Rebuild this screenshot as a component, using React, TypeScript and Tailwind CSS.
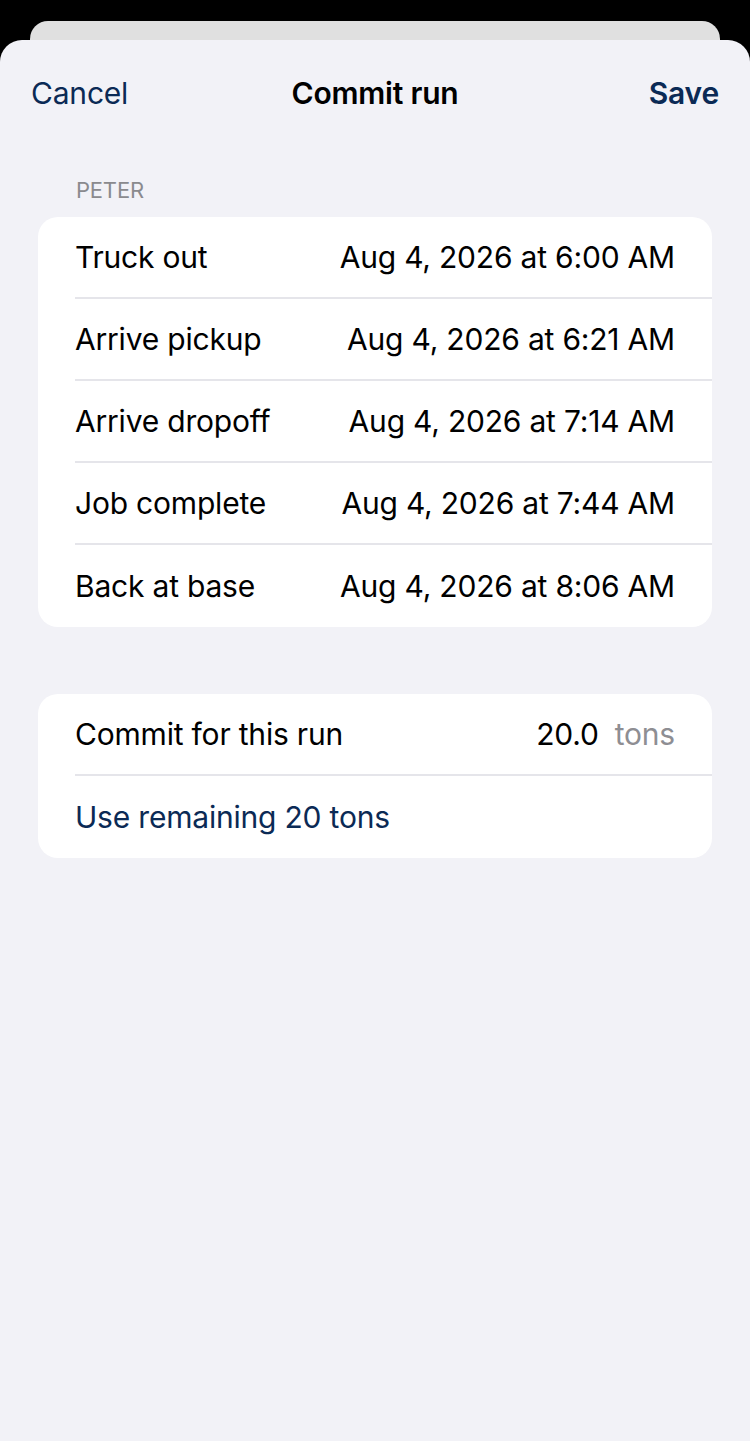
import React from "react";

const times = [
  { label: "Truck out", value: "Aug 4, 2026 at 6:00 AM" },
  { label: "Arrive pickup", value: "Aug 4, 2026 at 6:21 AM" },
  { label: "Arrive dropoff", value: "Aug 4, 2026 at 7:14 AM" },
  { label: "Job complete", value: "Aug 4, 2026 at 7:44 AM" },
  { label: "Back at base", value: "Aug 4, 2026 at 8:06 AM" },
];

function Row({ children, last }: { children: React.ReactNode; last?: boolean }) {
  return (
    <div className="pl-[37px]">
      <div
        className={`h-[82px] flex items-center justify-between pr-[37px] ${
          last ? "" : "border-b-2 border-[#e5e5ea]"
        }`}
      >
        {children}
      </div>
    </div>
  );
}

export default function App() {
  return (
    <div
      className="w-[750px] h-[1441px] bg-black flex flex-col overflow-hidden"
      style={{ fontFamily: "Inter, 'Noto Sans', sans-serif" }}
    >
      <div className="pt-[21px] px-[30px]">
        <div className="h-[40px] bg-[#e0e0e0] rounded-t-[18px]" />
      </div>
      <div className="-mt-[21px] flex-1 bg-[#f2f2f7] rounded-t-[22px] tracking-[-0.2px]">
        <div className="h-[106px] px-[31px] flex items-center justify-between relative">
          <button className="text-[30px] text-[#0b2a55]">Cancel</button>
          <div className="absolute left-0 right-0 text-center text-[30px] font-semibold text-black pointer-events-none">
            Commit run
          </div>
          <button className="text-[30px] font-semibold text-[#0b2a55]">Save</button>
        </div>

        <div className="pl-[76px] pt-[30px] pb-[13px] text-[22px] text-[#8a8a8e] uppercase leading-[28px]">
          Peter
        </div>

        <div className="mx-[38px] bg-white rounded-[20px] overflow-hidden">
          {times.map((t, i) => (
            <Row key={t.label} last={i === times.length - 1}>
              <span className="text-[30px] text-black">{t.label}</span>
              <span className="text-[30px] text-black">{t.value}</span>
            </Row>
          ))}
        </div>

        <div className="mt-[67px] mx-[38px] bg-white rounded-[20px] overflow-hidden">
          <Row>
            <span className="text-[30px] text-black">Commit for this run</span>
            <span className="text-[30px]">
              <span className="text-black">20.0</span>
              <span className="text-[#8e8e93] ml-[16px]">tons</span>
            </span>
          </Row>
          <Row last>
            <span className="text-[30px] text-[#0b2a55]">Use remaining 20 tons</span>
          </Row>
        </div>
      </div>
    </div>
  );
}
